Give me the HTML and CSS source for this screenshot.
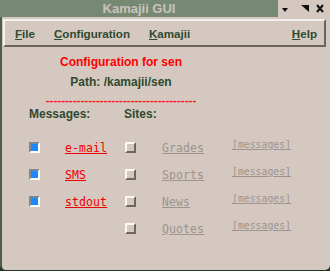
FILE: index.html
```html
<!DOCTYPE html>
<html lang="en">
<head>
    <meta charset="UTF-8">
    <title>Kamajii GUI</title>
    <link rel="stylesheet" href="styles.css">
</head>
<body>
    <div class="window">
        <div class="titlebar">
            <div class="title">Kamajii GUI</div>
            <div class="buttons">
                <svg width="52" height="17" viewBox="0 0 52 17">
                    <polygon points="4,8 10,8 7,12" fill="#111"/>
                    <polygon points="23,5 31,5 31,12" fill="#111"/>
                    <path d="M39 5 L45 12 M45 5 L39 12" stroke="#111" stroke-width="2"/>
                </svg>
            </div>
        </div>

        <div class="menubar">
            <span class="menu"><u>F</u>ile</span>
            <span class="menu"><u>C</u>onfiguration</span>
            <span class="menu"><u>K</u>amajii</span>
            <span class="menu help"><u>H</u>elp</span>
        </div>

        <div class="header">
            <div class="config">Configuration for sen</div>
            <div class="path">Path: /kamajii/sen</div>
            <div class="dashes">---------------------------------------</div>
        </div>

        <div class="grid">
            <div class="heading span2">Messages:</div>
            <div class="heading span3">Sites:</div>

            <span class="cb on"></span>
            <span class="msg">e-mail</span>
            <span class="cb"></span>
            <span class="site">Grades</span>
            <span class="link">[messages]</span>

            <span class="cb on"></span>
            <span class="msg">SMS</span>
            <span class="cb"></span>
            <span class="site">Sports</span>
            <span class="link">[messages]</span>

            <span class="cb on"></span>
            <span class="msg">stdout</span>
            <span class="cb"></span>
            <span class="site">News</span>
            <span class="link">[messages]</span>

            <span></span>
            <span></span>
            <span class="cb"></span>
            <span class="site">Quotes</span>
            <span class="link">[messages]</span>
        </div>
    </div>
</body>
</html>
```

FILE: styles.css
```css
* {
    margin: 0;
    padding: 0;
    box-sizing: border-box;
}

body {
    background: #223322;
    width: 330px;
    height: 271px;
    overflow: hidden;
    font-family: 'Liberation Sans', Arial, sans-serif;
}

.window {
    width: 330px;
    height: 270px;
    background: #d4c8c0;
    border-left: 2px solid #4e5e4c;
    border-radius: 0 0 5px 5px;
}

.titlebar {
    display: flex;
    height: 17px;
    margin-left: -2px;
    background: #768a73;
}

.title {
    flex: 1;
    text-align: center;
    color: #cac2bd;
    font-weight: bold;
    font-size: 13px;
    line-height: 17px;
}

.buttons {
    width: 52px;
    background: #d4c8c0;
}

.buttons svg {
    display: block;
}

.menubar {
    display: flex;
    gap: 19px;
    height: 28px;
    margin: 2px 4px 0 1px;
    padding: 0 0 0 10px;
    align-items: center;
    border-top: 2px solid #f4f0ee;
    border-left: 2px solid #f4f0ee;
    border-bottom: 2px solid #6c6460;
    border-right: 2px solid #6c6460;
    font-size: 11.6px;
    font-weight: bold;
    color: #2f4a2f;
}

.menu.help {
    margin-left: auto;
    margin-right: 7px;
}

.header {
    width: 238px;
    text-align: center;
    font-weight: bold;
    font-size: 12px;
}

.config {
    color: #ff0000;
    margin-top: 8px;
    line-height: 14px;
}

.path {
    color: #2f4a2f;
    margin-top: 6px;
    line-height: 14px;
}

.dashes {
    color: #ff1010;
    margin-top: 4px;
    line-height: 14px;
    font-size: 11.6px;
}

.grid {
    display: grid;
    grid-template-columns: 36px 60px 37px 70px auto;
    grid-auto-rows: 27px;
    align-items: center;
    margin: 0 0 0 27px;
}

.heading {
    font-size: 12px;
    font-weight: bold;
    color: #2f4a2f;
    height: 20px;
    line-height: 20px;
    margin-top: -13px;
}

.span2 {
    grid-column: span 2;
}

.span3 {
    grid-column: span 3;
    margin-left: -1px;
}

.cb {
    width: 11px;
    height: 11px;
    background: #d4c8c0;
    border-top: 2px solid #fbf8f6;
    border-left: 2px solid #fbf8f6;
    border-bottom: 2px solid #6e6662;
    border-right: 2px solid #6e6662;
}

.cb.on {
    background: #1e88ff;
    border-top-color: #7a8a90;
    border-left-color: #7a8a90;
    border-bottom-color: #ffffff;
    border-right-color: #ffffff;
}

.msg, .site {
    font-family: 'DejaVu Sans Mono', monospace;
    font-size: 11.5px;
    text-decoration: underline;
    letter-spacing: 0.1px;
}

.msg {
    color: #f00000;
}

.site {
    color: #9c948e;
}

.link {
    font-family: 'DejaVu Sans Mono', monospace;
    font-size: 9.8px;
    color: #9c948e;
    text-decoration: underline;
    margin-top: -6px;
}
```
